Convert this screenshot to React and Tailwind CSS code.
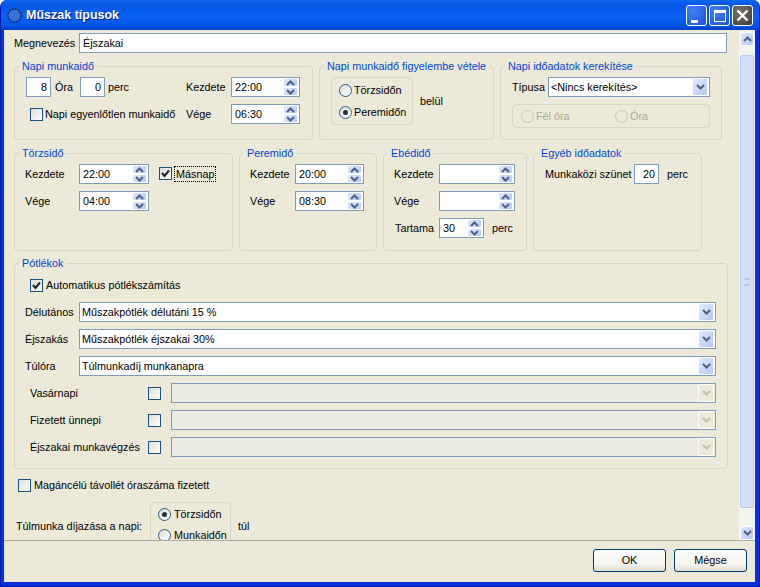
import React from "react";

const Up = ({ className = "" }) => (
  <svg width="9" height="6" viewBox="0 0 9 6" className={className}>
    <polyline points="1,5 4.5,1.5 8,5" fill="none" stroke="currentColor" strokeWidth="2" />
  </svg>
);

const Down = ({ className = "" }) => (
  <svg width="9" height="6" viewBox="0 0 9 6" className={className}>
    <polyline points="1,1 4.5,4.5 8,1" fill="none" stroke="currentColor" strokeWidth="2" />
  </svg>
);

const btnBlue =
  "flex items-center justify-center rounded-[2px] border border-white bg-[linear-gradient(135deg,#e1eafe,#b4c8f6)] text-[#4d6185]";

function Box({ value, className = "" }) {
  return (
    <div className={`flex h-[20px] shrink-0 items-center justify-end border border-[#7f9db9] bg-white pr-[3px] ${className}`}>
      {value}
    </div>
  );
}

function Spin({ value, className = "" }) {
  return (
    <div className={`flex h-[20px] shrink-0 items-center justify-between border border-[#7f9db9] bg-white pl-[3px] pr-[1px] ${className}`}>
      <span>{value}</span>
      <div className="flex w-[15px] flex-col">
        <div className={`${btnBlue} h-[9px]`}>
          <Up />
        </div>
        <div className={`${btnBlue} h-[9px]`}>
          <Down />
        </div>
      </div>
    </div>
  );
}

function Check({ checked }) {
  return (
    <span className="flex h-[13px] w-[13px] shrink-0 items-center justify-center border border-[#1c5180] bg-[linear-gradient(135deg,#dcdcd7,#ffffff)]">
      {checked && (
        <svg width="9" height="9" viewBox="0 0 9 9">
          <polyline points="1,4 3.5,7 8,1.5" fill="none" stroke="#1a2430" strokeWidth="2" />
        </svg>
      )}
    </span>
  );
}

function Radio({ checked, disabled }) {
  return (
    <span
      className={`flex h-[13px] w-[13px] shrink-0 items-center justify-center rounded-full border ${
        disabled ? "border-[#cac8bb]" : "border-[#2f5d8a] bg-[linear-gradient(135deg,#dcdcd7,#ffffff)]"
      }`}
    >
      {checked && <span className="h-[5px] w-[5px] rounded-full bg-[#24313c]" />}
    </span>
  );
}

function Combo({ value, disabled, className = "" }) {
  return (
    <div
      className={`flex h-[20px] shrink-0 items-center justify-between border border-[#7f9db9] pl-[2px] pr-[1px] ${
        disabled ? "bg-[#ebebe4]" : "bg-white"
      } ${className}`}
    >
      <span>{value}</span>
      {disabled ? (
        <div className="flex h-[18px] w-[16px] items-center justify-center rounded-[2px] border border-white bg-[#ece9d8] text-[#c2bfae]">
          <Down />
        </div>
      ) : (
        <div className={`${btnBlue} h-[18px] w-[16px]`}>
          <Down />
        </div>
      )}
    </div>
  );
}

function Group({ title, className = "", children }) {
  return (
    <fieldset className={`shrink-0 rounded-[4px] border border-[#d8d6c6] pt-[4px] ${className}`}>
      <legend className="ml-[4px] h-[14px] px-[3px] leading-[14px] text-[#0046d5]">{title}</legend>
      {children}
    </fieldset>
  );
}

// label + spin row, used by the time groups
function TimeRow({ label, labelW, value, spinW, className = "" }) {
  return (
    <div className={`flex h-[20px] items-center ${className}`}>
      <span className={labelW}>{label}</span>
      <Spin value={value} className={spinW} />
    </div>
  );
}

function DisabledRow({ label }) {
  return (
    <div className="mt-[7px] flex h-[20px] items-center pl-[15px]">
      <span className="w-[118px]">{label}</span>
      <Check />
      <Combo disabled className="ml-[10px] w-[545px]" />
    </div>
  );
}

function ComboRow({ label, value }) {
  return (
    <div className="mt-[7px] flex h-[20px] items-center pl-[10px]">
      <span className="w-[54px]">{label}</span>
      <Combo value={value} className="w-[637px]" />
    </div>
  );
}

function WinButton({ close, children }) {
  return (
    <div
      className={`flex h-[21px] w-[21px] items-center justify-center rounded-[3px] border border-white ${
        close
          ? "bg-[radial-gradient(circle_at_35%_30%,#7d7468,#3e3a36)]"
          : "bg-[radial-gradient(circle_at_30%_25%,#3f80f5,#1c52d8)]"
      }`}
    >
      {children}
    </div>
  );
}

function ScrollButton({ children }) {
  return (
    <div className="flex h-[14px] w-[14px] items-center justify-center rounded-[2px] border border-white bg-[linear-gradient(135deg,#dbe5fc,#b4c8f6)] text-[#4d6185]">
      {children}
    </div>
  );
}

function Scrollbar() {
  return (
    <div className="flex w-[16px] shrink-0 flex-col items-center bg-[#f3f3ee] pt-[2px]">
      <ScrollButton>
        <Up />
      </ScrollButton>
      <div className="mt-[9px] flex h-[453px] w-[14px] items-center justify-center rounded-[2px] border border-[#b4c9ee] bg-[#cfe0f8]">
        <div className="h-[8px] w-[6px] border-y-2 border-[#b2c7ee]" />
      </div>
      <div className="mt-auto">
        <ScrollButton>
          <Down />
        </ScrollButton>
      </div>
    </div>
  );
}

function XpButton({ children, className = "" }) {
  return (
    <div className={`flex h-[23px] w-[73px] items-center justify-center rounded-[3px] border border-[#003c74] bg-[linear-gradient(180deg,#ffffff,#f3f3ee_70%,#dcd8cc)] ${className}`}>
      {children}
    </div>
  );
}

export default function App() {
  return (
    <div className="flex h-[587px] w-[760px] flex-col overflow-hidden whitespace-nowrap rounded-t-[7px] border-x border-b border-[#0019a8] bg-[#0831d9] font-['Liberation_Sans',sans-serif] text-[10.8px] leading-none text-black">
      {/* Title bar */}
      <div className="flex h-[30px] shrink-0 items-center bg-[linear-gradient(180deg,#0a6af0_0%,#0a5be8_8%,#0356e6_20%,#0a62f6_55%,#0055e4_85%,#003fc4_100%)] pl-[6px] pr-[6px]">
        <svg width="15" height="15" viewBox="0 0 15 15" className="shrink-0">
          <circle cx="7.5" cy="7.5" r="6.5" fill="#3a6fd8" stroke="#0b2360" strokeWidth="1.4" strokeDasharray="2 1" />
        </svg>
        <span className="ml-[4px] text-[12.5px] font-bold text-white [text-shadow:1px_1px_#0f1a80]">
          Műszak típusok
        </span>
        <div className="ml-auto mt-[1px] flex gap-[2px]">
          <WinButton>
            <div className="mt-[11px] mr-[5px] h-[3px] w-[7px] bg-white" />
          </WinButton>
          <WinButton>
            <div className="h-[12px] w-[12px] border border-t-[3px] border-white" />
          </WinButton>
          <WinButton close>
            <svg width="13" height="13" viewBox="0 0 13 13">
              <path d="M1.5 1.5 L11.5 11.5 M11.5 1.5 L1.5 11.5" stroke="white" strokeWidth="2.4" />
            </svg>
          </WinButton>
        </div>
      </div>

      {/* Client area */}
      <div className="ml-[3px] flex h-[552px] w-[751px] shrink-0 flex-col bg-[#ece9d8]">
        <div className="flex h-[511px] shrink-0 overflow-hidden border-b border-[#aca899]">
          <div className="h-full w-[735px] shrink-0 overflow-hidden pl-[10px] pt-[3px]">
            <div className="flex h-[20px] items-center">
              <span className="w-[65px]">Megnevezés</span>
              <div className="flex h-[20px] w-[648px] items-center border border-[#7f9db9] bg-white pl-[3px]">Éjszakai</div>
            </div>

            {/* Row 1 */}
            <div className="mt-[6px] flex gap-[6px]">
              <Group title="Napi munkaidő" className="h-[81px] w-[299px]">
                <div className="flex h-[20px] items-center pl-[11px]">
                  <Box value="8" className="w-[25px]" />
                  <span className="w-[29px] pl-[4px]">Óra</span>
                  <Box value="0" className="w-[25px]" />
                  <span className="w-[81px] pl-[3px]">perc</span>
                  <span className="w-[45px]">Kezdete</span>
                  <Spin value="22:00" className="w-[69px]" />
                </div>
                <div className="mt-[7px] flex h-[20px] items-center pl-[15px]">
                  <Check />
                  <span className="w-[143px] pl-[2px]">Napi egyenlőtlen munkaidő</span>
                  <span className="w-[45px]">Vége</span>
                  <Spin value="06:30" className="w-[69px]" />
                </div>
              </Group>

              <Group title="Napi munkaidő figyelembe vétele" className="h-[81px] w-[175px]">
                <div className="flex items-center pl-[11px]">
                  <div className="flex h-[48px] w-[82px] flex-col gap-[9px] rounded-[4px] border border-[#d8d6c6] pl-[7px] pt-[6px]">
                    <div className="flex items-center gap-[2px]">
                      <Radio />
                      Törzsidőn
                    </div>
                    <div className="flex items-center gap-[2px]">
                      <Radio checked />
                      Peremidőn
                    </div>
                  </div>
                  <span className="ml-[7px]">belül</span>
                </div>
              </Group>

              <Group title="Napi időadatok kerekítése" className="h-[81px] w-[222px]">
                <div className="flex h-[20px] items-center pl-[11px]">
                  <span className="w-[36px]">Típusa</span>
                  <Combo value="<Nincs kerekítés>" className="w-[162px]" />
                </div>
                <div className="ml-[11px] mt-[7px] flex h-[24px] w-[198px] items-center rounded-[4px] border border-[#d8d6c6] pl-[8px] text-[#aca899]">
                  <div className="flex w-[94px] items-center gap-[2px]">
                    <Radio disabled />
                    Fél óra
                  </div>
                  <div className="flex items-center gap-[2px]">
                    <Radio disabled />
                    Óra
                  </div>
                </div>
              </Group>
            </div>

            {/* Row 2 */}
            <div className="mt-[6px] flex gap-[6px]">
              <Group title="Törzsidő" className="h-[105px] w-[219px]">
                <div className="flex items-center pl-[10px]">
                  <TimeRow label="Kezdete" labelW="w-[54px]" value="22:00" spinW="w-[70px]" />
                  <div className="ml-[10px] flex items-center">
                    <Check checked />
                    <span className="ml-[2px] border border-dotted border-black px-[1px] py-[2px]">Másnap</span>
                  </div>
                </div>
                <TimeRow label="Vége" labelW="w-[54px]" value="04:00" spinW="w-[70px]" className="mt-[7px] pl-[10px]" />
              </Group>

              <Group title="Peremidő" className="h-[105px] w-[138px]">
                <TimeRow label="Kezdete" labelW="w-[45px]" value="20:00" spinW="w-[69px]" className="pl-[10px]" />
                <TimeRow label="Vége" labelW="w-[45px]" value="08:30" spinW="w-[69px]" className="mt-[7px] pl-[10px]" />
              </Group>

              <Group title="Ebédidő" className="h-[105px] w-[144px]">
                <TimeRow label="Kezdete" labelW="w-[45px]" spinW="w-[76px]" className="pl-[10px]" />
                <TimeRow label="Vége" labelW="w-[45px]" spinW="w-[76px]" className="mt-[7px] pl-[10px]" />
                <div className="mt-[7px] flex h-[20px] items-center pl-[11px]">
                  <span className="w-[44px]">Tartama</span>
                  <Spin value="30" className="w-[45px]" />
                  <span className="ml-[8px]">perc</span>
                </div>
              </Group>

              <Group title="Egyéb időadatok" className="h-[105px] w-[169px]">
                <div className="flex h-[20px] items-center pl-[11px]">
                  <span className="w-[89px]">Munkaközi szünet</span>
                  <Box value="20" className="w-[25px]" />
                  <span className="ml-[8px]">perc</span>
                </div>
              </Group>
            </div>

            {/* Pótlékok */}
            <Group title="Pótlékok" className="mt-[5px] h-[213px] w-[714px]">
              <div className="mt-[4px] flex h-[14px] items-center pl-[15px]">
                <Check checked />
                <span className="ml-[3px]">Automatikus pótlékszámítás</span>
              </div>
              <div className="pt-[3px]">
                <ComboRow label="Délutános" value="Műszakpótlék délutáni 15 %" />
                <ComboRow label="Éjszakás" value="Műszakpótlék éjszakai 30%" />
                <ComboRow label="Túlóra" value="Túlmunkadíj munkanapra" />
                <DisabledRow label="Vasárnapi" />
                <DisabledRow label="Fizetett ünnepi" />
                <DisabledRow label="Éjszakai munkavégzés" />
              </div>
            </Group>

            <div className="mt-[10px] flex h-[13px] items-center pl-[4px]">
              <Check />
              <span className="ml-[3px]">Magáncélú távollét óraszáma fizetett</span>
            </div>

            <div className="mt-[10px] flex items-center pl-[2px]">
              <span className="w-[134px]">Túlmunka díjazása a napi:</span>
              <div className="flex h-[48px] w-[81px] shrink-0 flex-col gap-[8px] rounded-[4px] border border-[#d8d6c6] pl-[7px] pt-[5px]">
                <div className="flex items-center gap-[3px]">
                  <Radio checked />
                  Törzsidőn
                </div>
                <div className="flex items-center gap-[3px]">
                  <Radio />
                  Munkaidőn
                </div>
              </div>
              <span className="ml-[7px]">túl</span>
            </div>
          </div>
          <Scrollbar />
        </div>

        {/* Footer buttons */}
        <div className="flex flex-1 items-start justify-end gap-[8px] pr-[8px] pt-[8px]">
          <XpButton>OK</XpButton>
          <XpButton>Mégse</XpButton>
        </div>
      </div>
    </div>
  );
}
